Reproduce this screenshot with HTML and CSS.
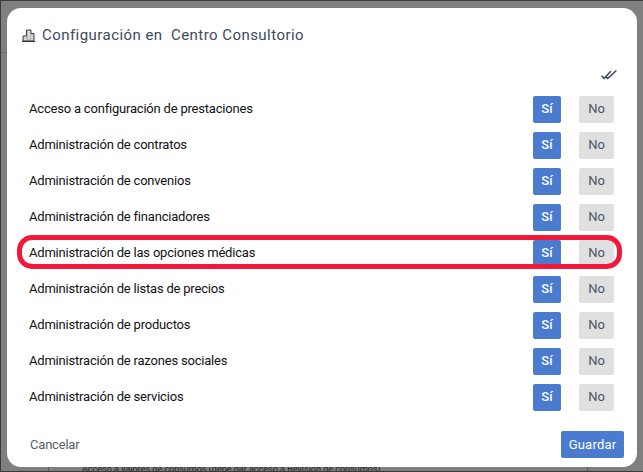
FILE: index.html
```html
<!DOCTYPE html>
<html lang="es">
<head>
    <meta charset="UTF-8">
    <meta name="viewport" content="width=device-width, initial-scale=1.0">
    <title>Configuración en Centro Consultorio</title>
    <link rel="stylesheet" href="styles.css">
</head>

<body>

    <div class="behind-text">Acceso a valores de consumos (debe dar acceso a Revisión de consumos)</div>
    <div class="behind-rule"></div>
    <div class="behind-line line-left"></div>
    <div class="behind-line line-right"></div>

    <div class="modal">
        <div class="modal-header">
            <svg class="icon-building" width="13" height="13" viewBox="0 0 13 13">
                <path d="M4.500 1h4.500v3.500H12v7.500H1v-5h3.500z" fill="#bbb" stroke="#444" stroke-width="1"/>
                <path d="M6 2.800h1.800M6 4.800h1.800M6 6.800h1.800M6 8.800h1.800M2.500 8.500h1.500M2.500 10.500h1.500M9.500 6.500h1.200M9.500 8.500h1.200M9.500 10.500h1.200" stroke="#fff" stroke-width="1"/>
                <path d="M0 12.500h13" stroke="#333" stroke-width="1"/>
            </svg>
            <h2>Configuración en&nbsp; Centro Consultorio</h2>
        </div>

        <div class="modal-body">
            <div class="check-all">
                <svg width="16" height="10" viewBox="0 0 16 10">
                    <path d="M0.600 5.800l2.500 2.700L9.800 1.200M5.200 7l1.500 1.600L15.400 0.600" fill="none" stroke="#2f3b55" stroke-width="1.400"/>
                </svg>
            </div>

            <div class="row">
                <span class="row-label">Acceso a configuración de prestaciones</span>
                <button class="btn-si">Sí</button>
                <button class="btn-no">No</button>
            </div>
            <div class="row">
                <span class="row-label">Administración de contratos</span>
                <button class="btn-si">Sí</button>
                <button class="btn-no">No</button>
            </div>
            <div class="row">
                <span class="row-label">Administración de convenios</span>
                <button class="btn-si">Sí</button>
                <button class="btn-no">No</button>
            </div>
            <div class="row">
                <span class="row-label">Administración de financiadores</span>
                <button class="btn-si">Sí</button>
                <button class="btn-no">No</button>
            </div>
            <div class="row row-marked">
                <span class="row-label">Administración de las opciones médicas</span>
                <button class="btn-si">Sí</button>
                <button class="btn-no">No</button>
            </div>
            <div class="row">
                <span class="row-label">Administración de listas de precios</span>
                <button class="btn-si">Sí</button>
                <button class="btn-no">No</button>
            </div>
            <div class="row">
                <span class="row-label">Administración de productos</span>
                <button class="btn-si">Sí</button>
                <button class="btn-no">No</button>
            </div>
            <div class="row">
                <span class="row-label">Administración de razones sociales</span>
                <button class="btn-si">Sí</button>
                <button class="btn-no">No</button>
            </div>
            <div class="row">
                <span class="row-label">Administración de servicios</span>
                <button class="btn-si">Sí</button>
                <button class="btn-no">No</button>
            </div>
        </div>

        <div class="modal-footer">
            <span class="cancelar">Cancelar</span>
            <button class="btn-guardar">Guardar</button>
        </div>
    </div>

</body>
</html>
```

FILE: styles.css
```css
html,
body {
    height: 100%;
}

body {
    font-family: 'Roboto', sans-serif;
    background-color: #7f7f7f;
    margin: 0;
    padding: 7px 6px 0 6px;
    box-sizing: border-box;
    border-top: 1px solid #3a3a3a;
    border-left: 1px solid #3a3a3a;
    border-bottom: 1px solid #3a3a3a;
    overflow: hidden;
    position: relative;
}

.modal {
    height: 459px;
    background-color: #fff;
    border-radius: 14px;
    display: flex;
    flex-direction: column;
    position: relative;
}

.modal-header {
    height: 54px;
    padding-left: 15px;
    display: flex;
    align-items: center;
    gap: 7px;
}

.modal-header h2 {
    margin: 0;
    font-size: 15px;
    font-weight: 400;
    color: #3d4a5c;
    letter-spacing: 0.45px;
}

.modal-body {
    padding: 0 23px 0 22px;
}

.check-all {
    height: 34px;
    display: flex;
    justify-content: flex-end;
    align-items: flex-start;
    padding-top: 8px;
    box-sizing: border-box;
}

.check-all svg {
    margin-right: -3px;
}

.row {
    height: 27px;
    margin-bottom: 9px;
    display: flex;
    align-items: center;
    position: relative;
}

.row-label {
    flex: 1;
    font-size: 13px;
    letter-spacing: -0.2px;
    color: #111;
    padding-bottom: 2px;
}

.row button {
    height: 27px;
    border: none;
    border-radius: 2px;
    padding: 0 0 2px;
    font-family: 'Roboto', sans-serif;
    font-size: 13px;
}

.btn-si {
    width: 28px;
    margin-right: 18px;
    background-color: #4a7bcf;
    color: #fff;
    font-weight: 500;
}

.btn-no {
    width: 35px;
    background-color: #e0e0e0;
    color: #4a5568;
}

/* marca roja sobre la fila */
.row-marked::after {
    content: "";
    position: absolute;
    left: -12px;
    right: -8px;
    top: -5px;
    bottom: -2px;
    border: 5px solid #f2183a;
    border-radius: 15px;
    pointer-events: none;
}

.modal-footer {
    padding: 0 13px 0 23px;
    margin-top: 11px;
    display: flex;
    justify-content: space-between;
    align-items: center;
}

.cancelar {
    font-size: 13px;
    letter-spacing: -0.2px;
    color: #555d6b;
}

.btn-guardar {
    width: 63px;
    height: 27px;
    background-color: #4a7bcf;
    color: #fff;
    border: none;
    border-radius: 2px;
    padding: 0;
    font-family: 'Roboto', sans-serif;
    font-size: 13px;
    letter-spacing: 0.2px;
}

/* lo que se ve de la pagina detras del modal */
.behind-text {
    position: absolute;
    left: 81px;
    top: 463px;
    font-size: 9px;
    color: #222;
}

.behind-rule {
    position: absolute;
    left: 0;
    top: 51px;
    width: 6px;
    height: 1px;
    background-color: #6a6a6a;
}

.behind-line {
    position: absolute;
    top: 460px;
    width: 1px;
    height: 12px;
    background-color: #555;
}

.line-left {
    left: 47px;
}

.line-right {
    left: 586px;
}
```
